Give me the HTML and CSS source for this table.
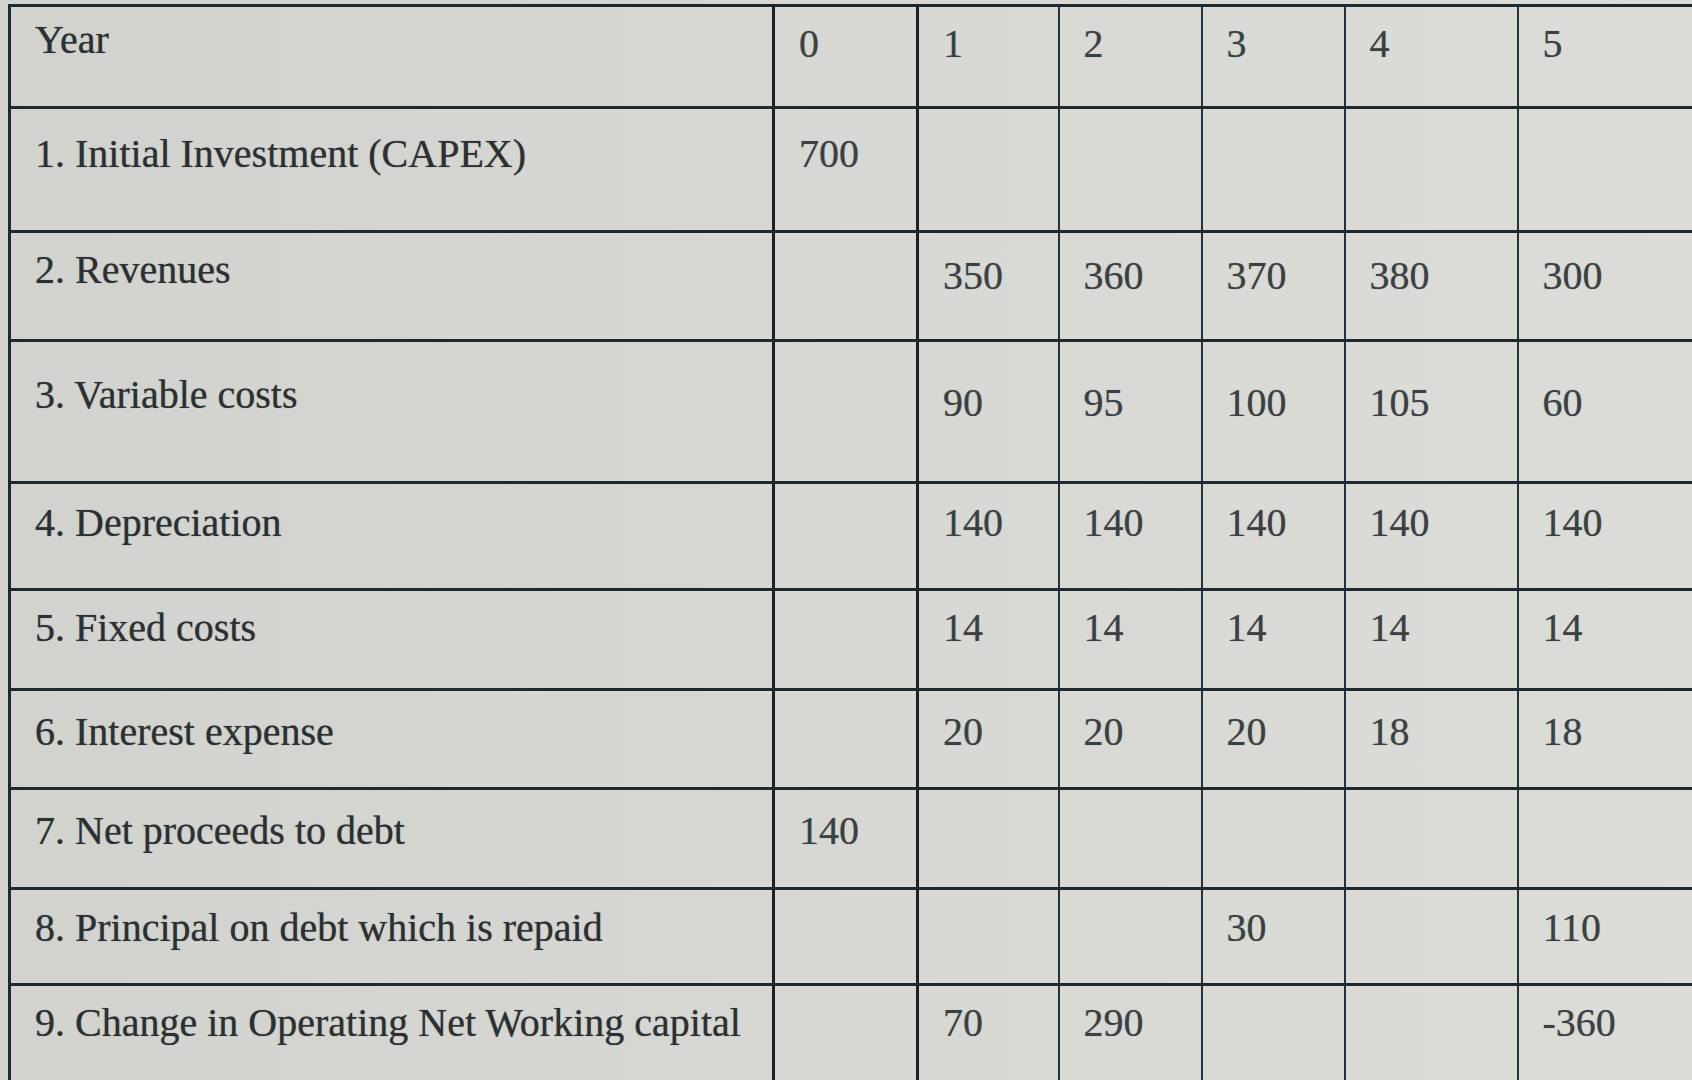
FILE: index.html
```html
<!DOCTYPE html>
<html lang="en">
<head>
<meta charset="utf-8">
<title>Project cash flow inputs</title>
<link rel="stylesheet" href="styles.css">
</head>
<body>
<div class="screen">
  <table class="sheet">
    <colgroup>
      <col class="c-label">
      <col class="c-y0">
      <col class="c-y1">
      <col class="c-y2">
      <col class="c-y3">
      <col class="c-y4">
      <col class="c-y5">
    </colgroup>
    <tr class="r-head">
      <td class="label">Year</td><td class="num">0</td><td class="num">1</td><td class="num">2</td><td class="num">3</td><td class="num">4</td><td class="num">5</td>
    </tr>
    <tr class="r1">
      <td class="label">1. Initial Investment (CAPEX)</td><td class="num">700</td><td></td><td></td><td></td><td></td><td></td>
    </tr>
    <tr class="r2">
      <td class="label">2. Revenues</td><td></td><td class="num">350</td><td class="num">360</td><td class="num">370</td><td class="num">380</td><td class="num">300</td>
    </tr>
    <tr class="r3">
      <td class="label">3. Variable costs</td><td></td><td class="num">90</td><td class="num">95</td><td class="num">100</td><td class="num">105</td><td class="num">60</td>
    </tr>
    <tr class="r4">
      <td class="label">4. Depreciation</td><td></td><td class="num">140</td><td class="num">140</td><td class="num">140</td><td class="num">140</td><td class="num">140</td>
    </tr>
    <tr class="r5">
      <td class="label">5. Fixed costs</td><td></td><td class="num">14</td><td class="num">14</td><td class="num">14</td><td class="num">14</td><td class="num">14</td>
    </tr>
    <tr class="r6">
      <td class="label">6. Interest expense</td><td></td><td class="num">20</td><td class="num">20</td><td class="num">20</td><td class="num">18</td><td class="num">18</td>
    </tr>
    <tr class="r7">
      <td class="label">7. Net proceeds to debt</td><td class="num">140</td><td></td><td></td><td></td><td></td><td></td>
    </tr>
    <tr class="r8">
      <td class="label">8. Principal on debt which is repaid</td><td></td><td></td><td></td><td class="num">30</td><td></td><td class="num">110</td>
    </tr>
    <tr class="r9">
      <td class="label">9. Change in Operating Net Working capital</td><td></td><td class="num">70</td><td class="num">290</td><td></td><td></td><td class="num">-360</td>
    </tr>
  </table>
</div>
</body>
</html>
```

FILE: styles.css
```css
html, body {
  margin: 0;
  padding: 0;
  background: #d6d6d3;
  overflow: hidden;
}

.screen {
  width: 1692px;
  height: 1080px;
  overflow: hidden;
  background: linear-gradient(90deg, #d2d2cf 0%, #d7d7d4 45%, #dcdcd9 100%);
  padding: 4px 0 0 8px;
  box-sizing: border-box;
}

.sheet {
  border-collapse: collapse;
  table-layout: fixed;
  width: 1690px;
  font-family: "Liberation Serif", "Times New Roman", serif;
  font-size: 40px;
  line-height: 46px;
}

.c-label { width: 764px; }
.c-y0 { width: 144px; }
.c-y1 { width: 141px; }
.c-y2 { width: 143px; }
.c-y3 { width: 143px; }
.c-y4 { width: 173px; }
.c-y5 { width: 182px; }

.sheet td {
  border-top: 3px solid #1f2a30;
  border-bottom: 3px solid #1f2a30;
  border-left: 2px solid #26323a;
  border-right: 2px solid #26323a;
  vertical-align: top;
  padding: 16px 0 0 24px;
  white-space: nowrap;
  overflow: hidden;
}

.sheet td:first-child {
  border-left: 3px solid #1f2a30;
  border-right: 3px solid #1a2228;
}

.sheet td:nth-child(2) {
  border-right: 3px solid #1a2228;
}

.label {
  color: #2c3032;
  text-shadow: 0 0 1px rgba(40, 44, 46, 0.6);
}

.num {
  color: #3b4043;
  text-shadow: 0 0 1px rgba(60, 64, 66, 0.5);
}

.r-head { height: 102px; }
.r-head td { padding-top: 14px; }
.r-head .label { padding-top: 10px; }
.r1 { height: 124px; }
.r1 td { padding-top: 22px; }
.r2 { height: 109px; }
.r2 td { padding-top: 14px; }
.r2 .num { padding-top: 20px; }
.r3 { height: 142px; }
.r3 td { padding-top: 30px; }
.r3 .num { padding-top: 38px; }
.r4 { height: 107px; }
.r4 td { padding-top: 16px; }
.r5 { height: 100px; }
.r5 td { padding-top: 14px; }
.r6 { height: 99px; }
.r6 td { padding-top: 18px; }
.r7 { height: 100px; }
.r7 td { padding-top: 18px; }
.r8 { height: 96px; }
.r8 td { padding-top: 15px; }
.r9 { height: 110px; }
.r9 td { padding-top: 14px; }
```
